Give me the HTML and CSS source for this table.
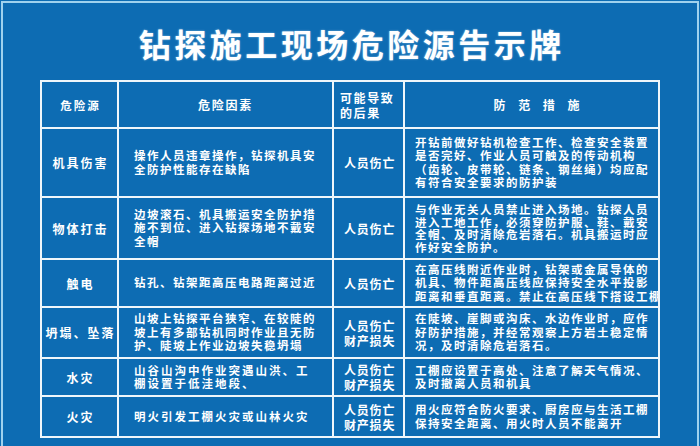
FILE: index.html
```html
<!DOCTYPE html>
<html lang="zh-CN">
<head>
<meta charset="utf-8">
<title>钻探施工现场危险源告示牌</title>
<link rel="stylesheet" href="styles.css">
</head>
<body>
<div class="board">
  <h1 class="title">钻探施工现场危险源告示牌</h1>
  <div class="table">
    <div class="cell c1 head">危险源</div>
    <div class="cell c2 head center">危险因素</div>
    <div class="cell c3 head">可能导致<br>的后果</div>
    <div class="cell c4 head center wide">防 范 措 施</div>

    <div class="cell c1">机具伤害</div>
    <div class="cell c2">操作人员违章操作，钻探机具安<br>全防护性能存在缺陷</div>
    <div class="cell c3">人员伤亡</div>
    <div class="cell c4">开钻前做好钻机检查工作、检查安全装置<br>是否完好、作业人员可触及的传动机构<br>（齿轮、皮带轮、链条、钢丝绳）均应配<br>有符合安全要求的防护装</div>

    <div class="cell c1">物体打击</div>
    <div class="cell c2">边坡滚石、机具搬运安全防护措<br>施不到位、进入钻探场地不戴安<br>全帽</div>
    <div class="cell c3">人员伤亡</div>
    <div class="cell c4 tight">与作业无关人员禁止进入场地。钻探人员<br>进入工地工作，必须穿防护服、鞋、戴安<br>全帽、及时清除危岩落石。机具搬运时应<br>作好安全防护。</div>

    <div class="cell c1">触电</div>
    <div class="cell c2">钻孔、钻架距高压电路距离过近</div>
    <div class="cell c3">人员伤亡</div>
    <div class="cell c4">在高压线附近作业时，钻架或金属导体的<br>机具、物件距高压线应保持安全水平投影<br>距离和垂直距离。禁止在高压线下搭设工棚</div>

    <div class="cell c1">坍塌、坠落</div>
    <div class="cell c2">山坡上钻探平台狭窄、在较陡的<br>坡上有多部钻机同时作业且无防<br>护、陡坡上作业边坡失稳坍塌</div>
    <div class="cell c3">人员伤亡<br>财产损失</div>
    <div class="cell c4">在陡坡、崖脚或沟床、水边作业时，应作<br>好防护措施，并经常观察上方岩土稳定情<br>况，及时清除危岩落石。</div>

    <div class="cell c1">水灾</div>
    <div class="cell c2 loose">山谷山沟中作业突遇山洪、工<br>棚设置于低洼地段、</div>
    <div class="cell c3">人员伤亡<br>财产损失</div>
    <div class="cell c4">工棚应设置于高处、注意了解天气情况、<br>及时撤离人员和机具</div>

    <div class="cell c1">火灾</div>
    <div class="cell c2 loose">明火引发工棚火灾或山林火灾</div>
    <div class="cell c3">人员伤亡<br>财产损失</div>
    <div class="cell c4">用火应符合防火要求、厨房应与生活工棚<br>保持安全距离、用火时人员不能离开</div>
  </div>
</div>
</body>
</html>
```
FILE: styles.css
```css
* { box-sizing: border-box; }
html, body {
  margin: 0;
  padding: 0;
  background: #0d6cb3;
}
body {
  width: 700px;
  height: 446px;
  overflow: hidden;
  padding: 1px 1px 0;
  font-family: "Noto Sans CJK SC", "Noto Sans", sans-serif;
  color: #ffffff;
}
.board {
  height: 450px;
  border: 2px solid #9fd2ee;
  border-bottom: 0;
  background: #0d6cb3;
}
.title {
  margin: 0;
  padding-top: 20px;
  height: 77px;
  line-height: 40px;
  font-size: 32px;
  font-weight: 700;
  letter-spacing: 3.5px;
  text-indent: 3.5px;
  text-align: center;
  text-shadow: 0 0 2px rgba(220, 240, 255, 0.6);
}
.table {
  margin-left: 37px;
  width: 620px;
  display: grid;
  grid-template-columns: 75px 213px 69px 253px;
  grid-template-rows: 45px 67px 60px 46px 49px 36px 39px;
  gap: 2px;
  padding: 2px;
  background: #eef6fb;
}
.cell {
  background: #0d6cb3;
  display: flex;
  align-items: center;
  font-weight: 700;
  white-space: nowrap;
  overflow: hidden;
}
.c1 {
  justify-content: center;
  font-size: 12px;
  letter-spacing: 2px;
  text-indent: 2px;
}
.c1.head {
  font-size: 11.5px;
}
.c2 {
  padding-left: 15px;
  font-size: 11.5px;
  letter-spacing: 1.5px;
  line-height: 13.5px;
}
.c2.loose {
  letter-spacing: 2px;
}
.c2.head {
  font-size: 12px;
  letter-spacing: 1.8px;
}
.center {
  justify-content: center;
  padding-left: 0;
}
.c3 {
  padding-left: 10px;
  font-size: 12px;
  letter-spacing: 0.8px;
  line-height: 15px;
}
.c3.head {
  padding-left: 6px;
  letter-spacing: 1.6px;
}
.c4 {
  padding-left: 10px;
  font-size: 11.5px;
  letter-spacing: 1.5px;
  line-height: 13.5px;
}
.c4.tight {
  line-height: 12.5px;
}
.c4.wide {
  font-size: 12px;
  letter-spacing: 5px;
  text-indent: 5px;
}
```
